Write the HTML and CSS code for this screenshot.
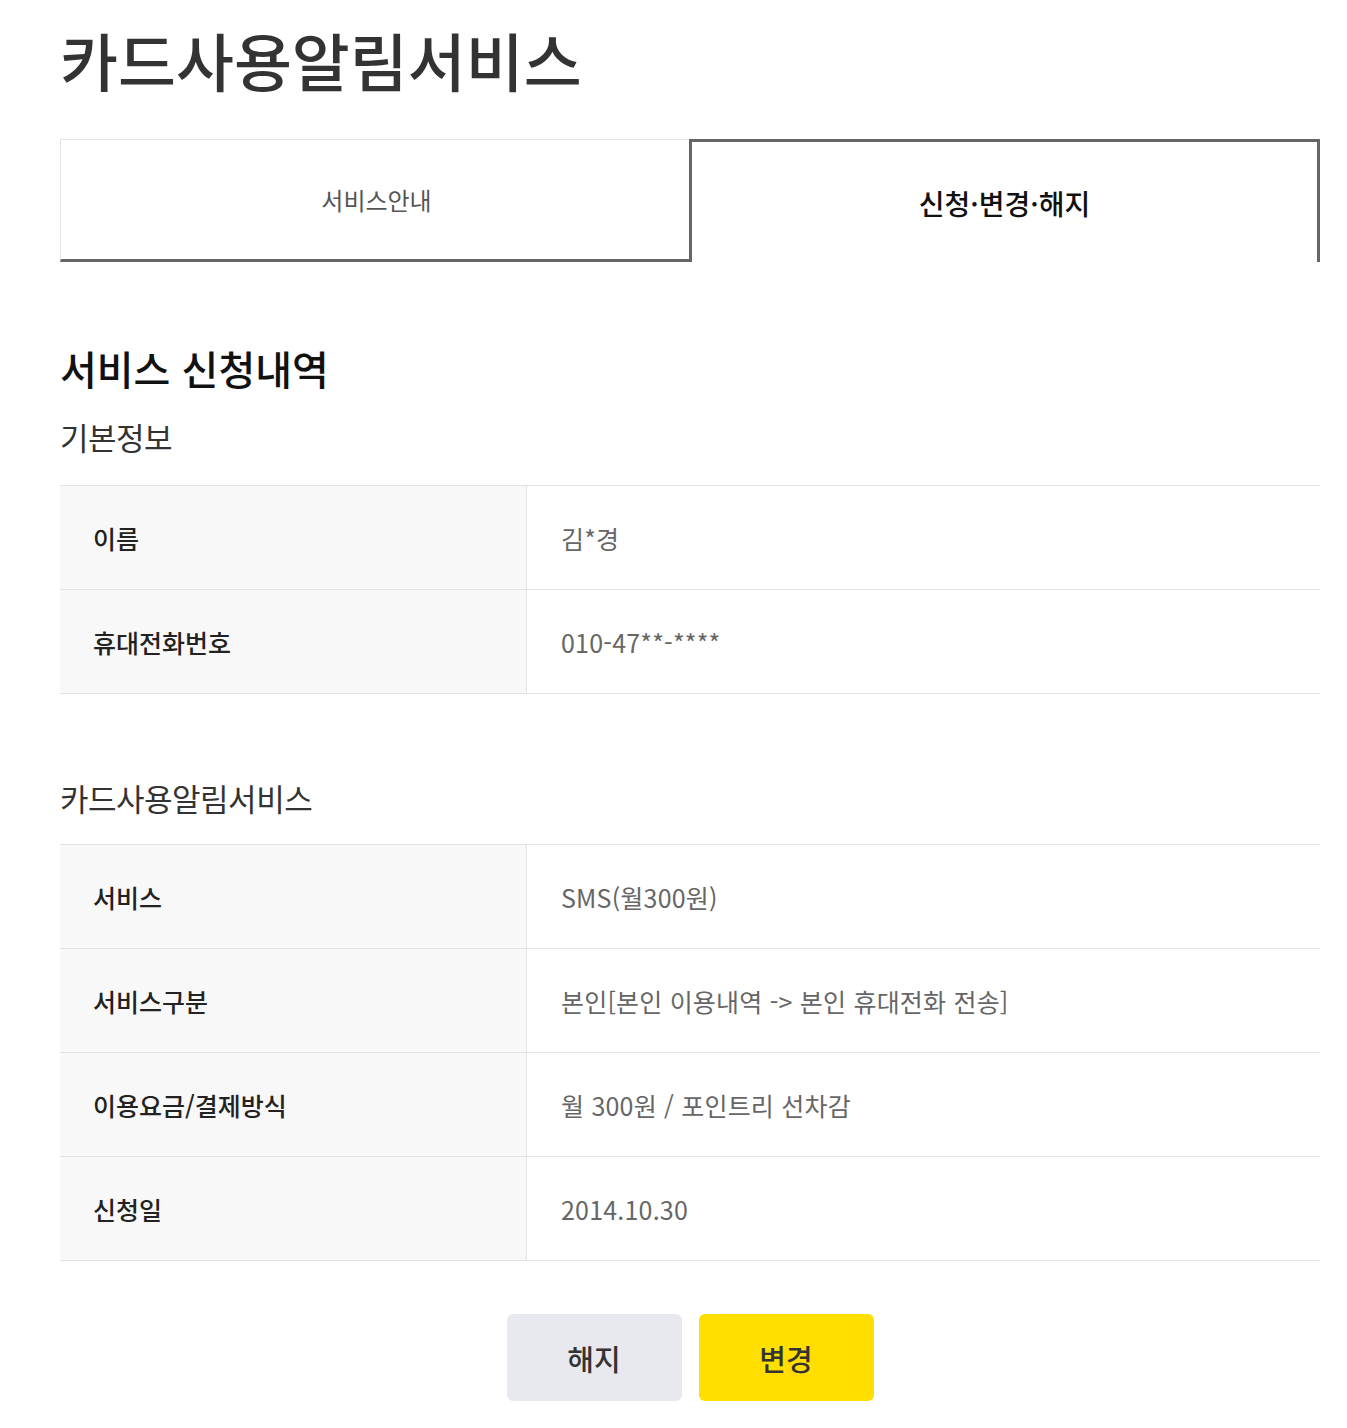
FILE: index.html
```html
<!DOCTYPE html>
<html lang="ko">
<head>
<meta charset="utf-8">
<title>카드사용알림서비스</title>
<link rel="stylesheet" href="styles.css">
</head>
<body>
<div class="page">
  <h1 class="page-title">카드사용알림서비스</h1>
  <div class="tabs">
    <a class="tab">서비스안내</a>
    <a class="tab tab-active">신청·변경·해지</a>
  </div>

  <h2 class="section-title">서비스 신청내역</h2>
  <h3 class="sub-title">기본정보</h3>
  <div class="info-table">
    <div class="row"><div class="th">이름</div><div class="td">김*경</div></div>
    <div class="row"><div class="th">휴대전화번호</div><div class="td">010-47**-****</div></div>
  </div>

  <h3 class="sub-title sub-title-2">카드사용알림서비스</h3>
  <div class="info-table">
    <div class="row"><div class="th">서비스</div><div class="td">SMS(월300원)</div></div>
    <div class="row"><div class="th">서비스구분</div><div class="td">본인[본인 이용내역 -&gt; 본인 휴대전화 전송]</div></div>
    <div class="row"><div class="th">이용요금/결제방식</div><div class="td">월 300원 / 포인트리 선차감</div></div>
    <div class="row"><div class="th">신청일</div><div class="td">2014.10.30</div></div>
  </div>

  <div class="buttons">
    <button class="btn btn-gray">해지</button>
    <button class="btn btn-yellow">변경</button>
  </div>
</div>
</body>
</html>
```
FILE: styles.css
```css
* { box-sizing: border-box; }
html, body { margin: 0; padding: 0; background: #fff; }
body {
  font-family: "Noto Sans CJK KR", "Noto Sans", sans-serif;
  color: #333;
}
.page {
  padding: 0 27px 0 60px;
}
.page-title {
  margin: 0;
  padding-top: 14px;
  height: 139px;
  font-size: 63px;
  font-weight: 500;
  line-height: 90px;
  color: #333;
}
.tabs {
  display: flex;
  height: 123px;
}
.tab {
  display: flex;
  align-items: center;
  justify-content: center;
  font-size: 24px;
  color: #555;
  border-top: 1px solid #e2e2e2;
  border-left: 1px solid #e2e2e2;
  border-bottom: 3px solid #666;
  flex: 0 0 632px;
}
.tab-active {
  flex: 1 1 auto;
  margin-left: -3px;
  border: 3px solid #666;
  border-bottom: none;
  font-size: 28px;
  font-weight: 500;
  color: #111;
  padding-top: 2px;
}
.section-title {
  margin: 78px 0 0;
  font-size: 40px;
  font-weight: 500;
  line-height: 56px;
  color: #111;
}
.sub-title {
  margin: 19px 0 0;
  font-size: 31px;
  font-weight: 400;
  line-height: 44px;
  height: 70px;
  color: #333;
  letter-spacing: -0.5px;
}
.sub-title-2 {
  margin-top: 82px;
  height: 68px;
}
.info-table {
  border-top: 1px solid #e2e2e2;
}
.row {
  display: grid;
  grid-template-columns: 467px 1fr;
  height: 104px;
  border-bottom: 1px solid #e2e2e2;
}
.th {
  background: #f8f8f8;
  border-right: 1px solid #e2e2e2;
  padding-left: 33px;
  display: flex;
  align-items: center;
  font-size: 25px;
  font-weight: 500;
  color: #222;
}
.td {
  padding-left: 34px;
  display: flex;
  align-items: center;
  font-size: 25px;
  color: #666;
  letter-spacing: 0.2px;
}
.buttons {
  display: flex;
  justify-content: center;
  gap: 17px;
  margin-top: 53px;
  padding-bottom: 28px;
}
.btn {
  width: 175px;
  height: 87px;
  border: none;
  border-radius: 6px;
  font-family: inherit;
  font-size: 29px;
  font-weight: 500;
  color: #333;
  cursor: pointer;
}
.btn-gray { background: #e8e9ee; }
.btn-yellow { background: #ffde00; }
```
